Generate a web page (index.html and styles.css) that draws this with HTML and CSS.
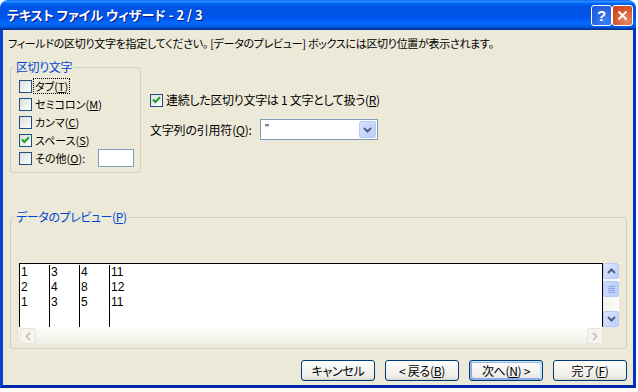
FILE: index.html
```html
<!DOCTYPE html>
<html lang="ja">
<head>
    <meta charset="utf-8">
    <title>テキスト ファイル ウィザード - 2 / 3</title>
    <link rel="stylesheet" href="styles.css">
</head>
<body>
    <div class="window">
        <div class="titlebar">
            <span class="title">テキスト ファイル ウィザード - 2 / 3</span>
            <div class="caption-buttons">
                <span class="caption-btn help">?</span>
                <span class="caption-btn close">
                    <svg width="11" height="11" viewBox="0 0 11 11"><path d="M1.5 1.5 L9.5 9.5 M9.5 1.5 L1.5 9.5" stroke="#fff" stroke-width="2" fill="none"/></svg>
                </span>
            </div>
        </div>

        <div class="client">
            <p class="intro">フィールドの区切り文字を指定してください。 [データのプレビュー] ボックスには区切り位置が表示されます。</p>

            <div class="top-row">
                <fieldset class="group delimiters">
                    <legend>区切り文字</legend>
                    <div class="check-row"><span class="checkbox"></span><span class="label focus">タブ(<u>T</u>)</span></div>
                    <div class="check-row"><span class="checkbox"></span><span class="label">セミコロン(<u>M</u>)</span></div>
                    <div class="check-row"><span class="checkbox"></span><span class="label">カンマ(<u>C</u>)</span></div>
                    <div class="check-row">
                        <span class="checkbox"><svg width="11" height="11" viewBox="0 0 11 11"><path d="M2 4.5 L4.3 7 L9 2.3" stroke="#21a121" stroke-width="2" fill="none"/></svg></span>
                        <span class="label">スペース(<u>S</u>)</span>
                    </div>
                    <div class="check-row"><span class="checkbox"></span><span class="label">その他(<u>O</u>):</span><span class="textbox"></span></div>
                </fieldset>

                <div class="options">
                    <div class="check-row">
                        <span class="checkbox"><svg width="11" height="11" viewBox="0 0 11 11"><path d="M2 4.5 L4.3 7 L9 2.3" stroke="#21a121" stroke-width="2" fill="none"/></svg></span>
                        <span class="label">連続した区切り文字は 1 文字として扱う(<u>R</u>)</span>
                    </div>
                    <div class="quote-row">
                        <span class="label">文字列の引用符(<u>Q</u>):</span>
                        <div class="combo">
                            <span class="combo-value">"</span>
                            <span class="drop-btn"><svg width="9" height="6" viewBox="0 0 9 6"><path d="M1 1 L4.5 4.5 L8 1" stroke="#4d6185" stroke-width="2" fill="none"/></svg></span>
                        </div>
                    </div>
                </div>
            </div>

            <fieldset class="group preview">
                <legend>データのプレビュー(<u>P</u>)</legend>
                <div class="preview-area">
                    <div class="data">
                        <div class="col"><span>1</span><span>2</span><span>1</span></div>
                        <div class="col"><span>3</span><span>4</span><span>3</span></div>
                        <div class="col"><span>4</span><span>8</span><span>5</span></div>
                        <div class="col last"><span>11</span><span>12</span><span>11</span></div>
                    </div>
                    <div class="vscroll">
                        <span class="sb-btn"><svg width="9" height="6" viewBox="0 0 9 6"><path d="M1 5 L4.5 1.5 L8 5" stroke="#4d6185" stroke-width="2" fill="none"/></svg></span>
                        <span class="sb-thumb"><i></i><i></i><i></i><i></i></span>
                        <span class="sb-btn down"><svg width="9" height="6" viewBox="0 0 9 6"><path d="M1 1 L4.5 4.5 L8 1" stroke="#4d6185" stroke-width="2" fill="none"/></svg></span>
                    </div>
                    <div class="hscroll">
                        <span class="sb-btn off"><svg width="6" height="9" viewBox="0 0 6 9"><path d="M5 1 L1.5 4.5 L5 8" stroke="#c9c7ba" stroke-width="2" fill="none"/></svg></span>
                        <span class="sb-btn off"><svg width="6" height="9" viewBox="0 0 6 9"><path d="M1 1 L4.5 4.5 L1 8" stroke="#c9c7ba" stroke-width="2" fill="none"/></svg></span>
                    </div>
                </div>
            </fieldset>

            <div class="buttons">
                <button class="btn">キャンセル</button>
                <button class="btn">&lt; 戻る(<u>B</u>)</button>
                <button class="btn default">次へ(<u>N</u>) &gt;</button>
                <button class="btn">完了(<u>F</u>)</button>
            </div>
        </div>
    </div>
</body>
</html>
```

FILE: styles.css
```css
body {
    margin: 0;
    background-color: #ffffff;
    font-family: "Noto Sans CJK JP", sans-serif;
    font-size: 11px;
    color: #000000;
}

.window {
    width: 636px;
    height: 388px;
    display: flex;
    flex-direction: column;
}

/* Title bar */
.titlebar {
    height: 30px;
    flex: none;
    box-sizing: border-box;
    display: flex;
    justify-content: space-between;
    align-items: flex-start;
    padding: 0 3px 0 7px;
    border-radius: 8px 8px 0 0;
    background: linear-gradient(to bottom, #0058ee 0%, #3593ff 4%, #288eff 6%, #127dff 8%, #036ffc 10%, #0262ee 14%, #0057e5 20%, #0054e3 24%, #0055eb 56%, #005bf5 66%, #026afe 76%, #0062ef 86%, #0052d6 92%, #0040ab 94%, #003092 100%);
}

.title {
    color: #ffffff;
    font-weight: bold;
    font-size: 13px;
    line-height: 30px;
    font-feature-settings: "palt";
    text-shadow: 1px 1px 0 #0a1883;
}

.caption-buttons {
    display: flex;
    margin-top: 5px;
}

.caption-btn {
    width: 21px;
    height: 21px;
    box-sizing: border-box;
    border: 1px solid #ffffff;
    border-radius: 3px;
    display: flex;
    align-items: center;
    justify-content: center;
}

.help {
    background: radial-gradient(circle at 70% 80%, #3a80f3 0%, #2663e0 60%, #1c55d6 100%);
    color: #ffffff;
    font-family: "Liberation Sans", sans-serif;
    font-weight: bold;
    font-size: 15px;
}

.close {
    background: radial-gradient(circle at 70% 80%, #e58b6b 0%, #d9572f 55%, #c4411b 100%);
}

/* Dialog body */
.client {
    flex: 1;
    background-color: #ece9d8;
    border: 3px solid #0842d5;
    border-top: none;
    border-bottom-color: #0026b0;
    border-right-color: #0031c4;
}

.intro {
    margin: 0;
    padding: 6px 0 0 5px;
    line-height: 14px;
    letter-spacing: -0.3px;
    font-feature-settings: "palt";
    white-space: nowrap;
}

.label {
    white-space: nowrap;
    font-feature-settings: "palt";
    line-height: 14px;
}

.top-row {
    display: flex;
    margin-top: 10px;
}

.group {
    margin: 0 0 0 7px;
    border: 1px solid #d0d0bf;
    border-radius: 3px;
    min-inline-size: 0;
}

.group legend {
    padding: 0 2px;
    margin-left: -5px;
    color: #0046d5;
    line-height: 14px;
    font-size: 12px;
    letter-spacing: -0.4px;
    font-feature-settings: "palt";
}

.delimiters {
    width: 131px;
    height: 113px;
    box-sizing: border-box;
    padding: 3px 6px 4px 8px;
}

.check-row {
    display: flex;
    align-items: center;
    height: 18px;
}

.checkbox {
    width: 13px;
    height: 13px;
    flex: none;
    box-sizing: border-box;
    border: 1px solid #1c5180;
    background: linear-gradient(135deg, #dcdcd7 0%, #ffffff 100%);
    margin-right: 1px;
    display: flex;
    align-items: center;
    justify-content: center;
}

.check-row .label {
    padding: 0 1px;
    border: 1px solid transparent;
}

.check-row .label.focus {
    border: 1px dotted #000000;
}

.textbox {
    width: 36px;
    height: 18px;
    box-sizing: border-box;
    margin-left: auto;
    border: 1px solid #7f9db9;
    background-color: #ffffff;
}

.options {
    width: 228px;
    margin-left: 9px;
    padding-top: 31px;
}

.options .check-row .label {
    font-size: 12px;
    letter-spacing: -0.3px;
}

.quote-row {
    display: flex;
    align-items: center;
    margin-top: 10px;
}

.quote-row .label {
    font-size: 12px;
    letter-spacing: -0.2px;
}

.combo {
    width: 118px;
    height: 21px;
    box-sizing: border-box;
    margin-left: auto;
    border: 1px solid #7f9db9;
    background-color: #ffffff;
    display: flex;
    align-items: stretch;
    justify-content: space-between;
    padding: 1px;
}

.combo-value {
    padding-left: 3px;
    line-height: 14px;
    font-family: "Liberation Sans", sans-serif;
}

.drop-btn {
    width: 17px;
    box-sizing: border-box;
    border: 1px solid #b9ccf8;
    border-radius: 2px;
    background: linear-gradient(135deg, #d4e0fd 0%, #b9cdf7 100%);
    display: flex;
    align-items: center;
    justify-content: center;
}

/* Preview */
.preview {
    width: 617px;
    height: 139px;
    box-sizing: border-box;
    margin-top: 37px;
    padding: 39px 7px 4px 8px;
}

.preview-area {
    display: grid;
    grid-template-columns: 584px 16px;
    grid-template-rows: 64px 17px;
}

.data {
    display: flex;
    background-color: #ffffff;
    border: 1px solid #000000;
    border-bottom: none;
    padding-top: 1px;
    font-family: "Liberation Sans", sans-serif;
    font-size: 12px;
}

.col {
    width: 29px;
    border-right: 1px solid #000000;
    display: flex;
    flex-direction: column;
}

.col.last {
    border-right: none;
}

.col span {
    height: 15px;
    line-height: 15px;
    padding-left: 1px;
}

.vscroll {
    background: linear-gradient(to right, #f3f1ec, #fefefb);
    display: flex;
    flex-direction: column;
}

.sb-btn {
    width: 16px;
    height: 16px;
    flex: none;
    box-sizing: border-box;
    border: 1px solid #b6c9f7;
    border-radius: 2px;
    background: linear-gradient(135deg, #dbe6fe 0%, #bccff8 100%);
    display: flex;
    align-items: center;
    justify-content: center;
}

.sb-btn.down {
    margin-top: auto;
}

.sb-thumb {
    height: 16px;
    margin-top: 2px;
    box-sizing: border-box;
    border: 1px solid #b6c9f7;
    border-radius: 2px;
    background: linear-gradient(to right, #c9d8fc, #bccff8);
    display: flex;
    flex-direction: column;
    align-items: center;
    justify-content: center;
    gap: 1px;
}

.sb-thumb i {
    width: 7px;
    height: 1px;
    background-color: #8ca5e6;
}

.hscroll {
    background: linear-gradient(to bottom, #fefefb, #f0efe6);
    display: flex;
    justify-content: space-between;
    padding: 1px 0 0 1px;
}

.sb-btn.off {
    border-color: #e6e4da;
    background: #f5f4ef;
}

/* Bottom buttons */
.buttons {
    display: flex;
    justify-content: flex-end;
    gap: 10px;
    margin-top: 11px;
    padding-right: 6px;
}

.btn {
    width: 74px;
    height: 21px;
    padding: 0;
    border: 1px solid #003c74;
    border-radius: 3px;
    background: linear-gradient(to bottom, #ffffff 0%, #ecebe6 86%, #d6d0c5 100%);
    font-family: "Noto Sans CJK JP", sans-serif;
    font-size: 12px;
    letter-spacing: -0.3px;
    font-feature-settings: "palt";
    color: #000000;
}

.btn.default {
    box-shadow: inset -1px 1px #cee7ff, inset 1px 2px #98b8ea, inset -2px 2px #bcd4f6, inset 1px -1px #89ade4, inset 2px -2px #89ade4;
}
```
